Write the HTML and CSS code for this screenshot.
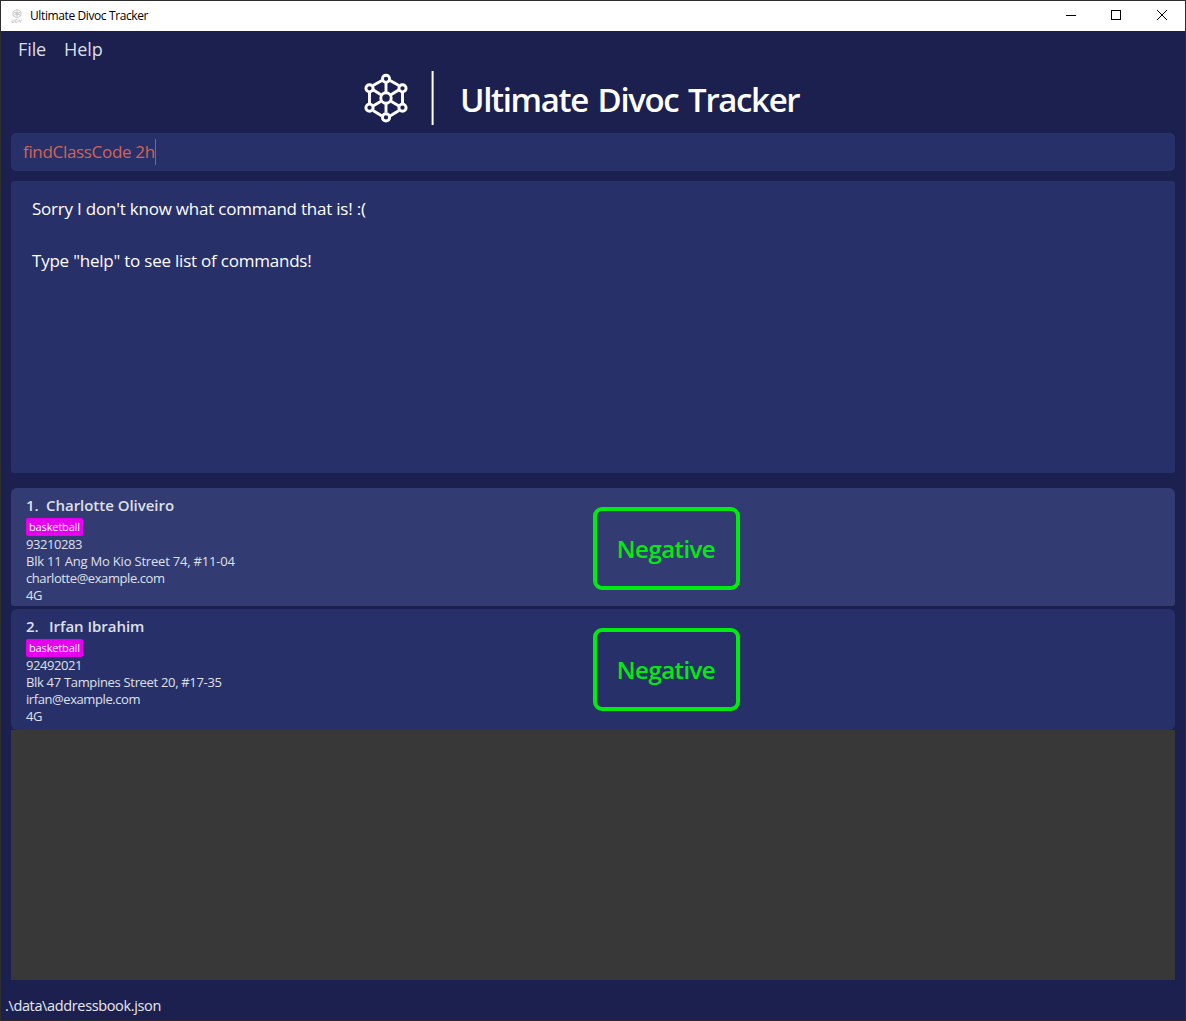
FILE: index.html
```html
<!DOCTYPE html>
<html lang="en">
<head>
<meta charset="utf-8">
<title>Ultimate Divoc Tracker</title>
<link rel="stylesheet" href="styles.css">
</head>
<body>
<div class="window">
  <header class="titlebar">
    <svg class="app-icon" viewBox="0 0 12 16" width="12" height="16"><g fill="none" stroke="#c8c8c8" stroke-width=".9"><path d="M6 1.500l4 2.200v4L6 10 2 7.700v-4zM6 1.500V10M2 3.700l8 4M10 3.700l-8 4"/><circle cx="6" cy="5.700" r="1.300"/><path d="M1 11.500v3h2v-3M4.700 11.500v3h1.300l1-1v-1l-1-1zM8 11.500l1.300 3 1.300-3"/></g></svg>
    <span class="window-title">Ultimate Divoc Tracker</span>
    <svg class="controls" viewBox="0 0 102 12" width="102" height="12" fill="none" stroke="#000"><path d="M0 5.500h10M45.500 .5h9v9h-9z" shape-rendering="crispEdges"/><path d="M91 0l10 10M101 0l-10 10"/></svg>
  </header>
  <nav class="menu"><span>File</span><span>Help</span></nav>
  <div class="banner">
    <svg class="logo" viewBox="0 0 46 52" width="46" height="52" fill="none" stroke="#fff" stroke-width="2.900"><path d="M19 7.500L10 12.600M27 7.500l9 5.100M6.500 18v13.500M39.500 18v13.500M10 37.500l9 5.500M36 37.500L27 43M23 9.500v10M23 30.500v9M10 16.800l8 5M36 16.800l-8 5M10 33l8-4.700M36 33l-8-4.700"/><circle cx="23" cy="5.800" r="3.600"/><circle cx="6.500" cy="15.300" r="3.600"/><circle cx="39.500" cy="15.300" r="3.600"/><circle cx="6.500" cy="34.700" r="3.600"/><circle cx="39.500" cy="34.700" r="3.600"/><circle cx="23" cy="44.400" r="3.600"/><circle cx="23" cy="25" r="5.200"/></svg>
    <span class="divider"></span>
    <h1>Ultimate Divoc Tracker</h1>
  </div>
  <div class="command"><span>findClassCode 2h</span><i class="caret"></i></div>
  <div class="result"><p>Sorry I don't know what command that is! :(</p><p>Type "help" to see list of commands!</p></div>
  <main class="list">
    <article class="card selected">
      <div class="person">
        <h2><span class="num">1.</span><span>Charlotte Oliveiro</span></h2>
        <span class="tag">basketball</span>
        <p>93210283</p>
        <p class="address">Blk 11 Ang Mo Kio Street 74, #11-04</p>
        <p>charlotte@example.com</p>
        <p>4G</p>
      </div>
      <div class="status">Negative</div>
    </article>
    <article class="card">
      <div class="person">
        <h2><span class="num wide">2.</span><span>Irfan Ibrahim</span></h2>
        <span class="tag">basketball</span>
        <p>92492021</p>
        <p class="address long">Blk 47 Tampines Street 20, #17-35</p>
        <p>irfan@example.com</p>
        <p>4G</p>
      </div>
      <div class="status">Negative</div>
    </article>
    <div class="empty"></div>
  </main>
  <footer class="statusbar">.\data\addressbook.json</footer>
</div>
</body>
</html>
```
FILE: styles.css
```css
* { box-sizing: border-box; }
body { margin: 0; background: #1c204f; font-family: "Open Sans", "Noto Sans", sans-serif; }
p, h1, h2 { margin: 0; white-space: nowrap; }
.window { width: 1186px; height: 1021px; border: 1px solid #2d2d2d; background: #1c204f; display: flex; flex-direction: column; overflow: hidden; }
.titlebar { height: 30px; flex: none; background: #fff; display: flex; align-items: center; padding: 0 17px 0 10px; }
.window-title { font-size: 12px; color: #000; margin-left: 7px; line-height: 28px; letter-spacing: -.39px; }
.controls { margin-left: auto; }
.menu { height: 37px; flex: none; display: flex; gap: 18px; padding-left: 17px; font-size: 18px; line-height: 37px; color: #dedfe6; letter-spacing: -.1px; }
.banner { height: 60px; flex: none; display: flex; align-items: center; padding-left: 362px; color: #fff; }
.logo { margin-top: 2px; }
.divider { width: 3px; height: 54px; background: linear-gradient(90deg, #777a97 1px, #fff 1px 2px, #a5a7bb 2px); margin-left: 22px; }
h1 { font-size: 33px; font-weight: 600; line-height: 60px; margin: 4px 0 0 26px; letter-spacing: -1.35px; word-spacing: 2.500px; }
.command { height: 38px; flex: none; margin: 5px 10px 0; padding: 0 12px 1px; background: #283069; border-radius: 5px; display: flex; align-items: center; font-size: 17px; letter-spacing: -.32px; color: #d26454; }
.caret { width: 1px; height: 26px; background: #a5595f; }
.result { height: 292px; flex: none; margin: 10px 10px 0; padding: 15px 21px; background: #283069; border-radius: 3px; color: #fff; font-size: 17px; line-height: 26px; letter-spacing: -.22px; }
.result p + p { margin-top: 26px; }
.list { height: 492px; flex: none; margin: 15px 10px 0; display: flex; flex-direction: column; }
.card { height: 120.500px; flex: none; padding: 7px 15px 0; background: #283069; border-radius: 6px; display: flex; color: #dfe0e9; }
.card.selected { height: 118px; margin-bottom: 3px; background: #333b73; border-radius: 6px 6px 3px 3px; }
.empty { flex: 1; background: #383838; }
.person { width: 567px; font-size: 13px; line-height: 17px; letter-spacing: -.42px; }
.person h2 { font-size: 15px; font-weight: 600; line-height: 20px; letter-spacing: -.03px; display: flex; }
.num { width: 20px; }
.num.wide { width: 23px; }
.address { letter-spacing: -.2px; }
.address.long { letter-spacing: -.32px; }
.tag { display: block; width: 57px; height: 18px; margin: 3px 0 0; padding-left: 3px; border-radius: 2px; background: #e600f0; color: #fff; font-size: 11px; line-height: 17px; letter-spacing: -.15px; }
.status { width: 147px; height: 83px; margin-top: 12px; padding: 0 1px 1px 0; border: 4px solid #00eb10; border-radius: 9px; color: #00eb10; display: flex; align-items: center; justify-content: center; font-size: 24px; font-weight: 600; letter-spacing: -.55px; }
.statusbar { padding: 15px 4px; font-size: 14.500px; line-height: 22px; letter-spacing: -.36px; color: #e8e8ef; }
```
